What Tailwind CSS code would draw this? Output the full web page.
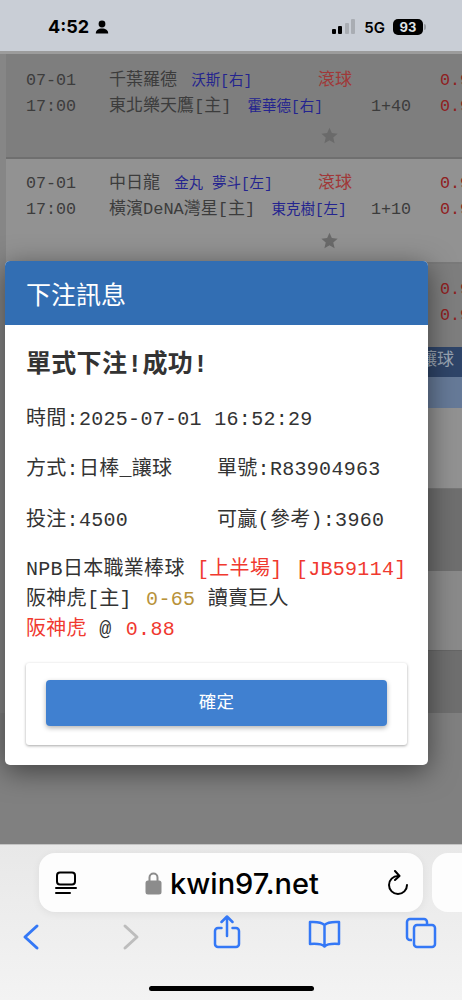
<!DOCTYPE html>
<html lang="zh-Hant">
<head>
    <meta charset="UTF-8">
    <meta name="viewport" content="width=device-width, initial-scale=1.0">
    <title>下注訊息</title>
    <script src="https://cdn.jsdelivr.net/npm/@tailwindcss/browser@4"></script>
</head>
<body class="bg-[#808080]">
<div class="relative w-[462px] h-[1000px] overflow-hidden bg-[#808080] font-['Liberation_Mono','Noto_Sans_CJK_TC',monospace]">

    <!-- Status bar -->
    <div class="flex h-[51px] items-center justify-between bg-[#c9ced6] pl-[48px] pr-[36px] pt-[3px] font-['Inter','Liberation_Sans',sans-serif] text-black">
        <div class="flex items-center gap-[6px]">
            <span class="text-[18px] font-bold leading-none">4:52</span>
            <svg class="w-[14px] h-[14px]" viewBox="0 0 14 14" fill="#000"><circle cx="7" cy="4" r="3.4"/><path d="M.8 13.5c0-3.4 2.600-5 6.200-5s6.200 1.600 6.200 5z"/></svg>
        </div>
        <div class="flex items-center">
            <svg class="w-[24px] h-[16px] mr-[8px]" viewBox="0 0 24 16"><rect x="0" y="10" width="4" height="5" rx="1" fill="#000"/><rect x="6" y="7" width="4" height="8" rx="1" fill="#000"/><rect x="13" y="4" width="4" height="11" rx="1" fill="#a9adb3"/><rect x="19" y="0" width="4" height="15" rx="1" fill="#a9adb3"/></svg>
            <span class="text-[15px] font-semibold leading-none mr-[8px]">5G</span>
            <span class="flex w-[30px] h-[16px] items-center justify-center rounded-[5px] bg-black text-[13px] font-bold leading-none text-[#dfe2e6]">93</span>
            <span class="ml-[1px] w-[2px] h-[6px] rounded-r bg-[#9a9ea4]"></span>
        </div>
    </div>

    <!-- Page behind the dialog -->
    <div class="h-[794px] overflow-hidden bg-[#868686] border-t-[3px] border-[#9c9c9c]">
        <div class="ml-[6px] h-[105px] bg-[#7e7e7e] border-b-2 border-[#6f6f6f] pt-[14px] text-[#3c3c3c]">
            <div class="grid grid-cols-[83px_209px_53px_69px_1fr] pl-[20px] text-[16.7px] leading-[26px] whitespace-nowrap">
                <span>07-01</span>
                <span class="text-[17px]">千葉羅德 <span class="ml-[4px] text-[14.5px] text-[#24248f]">沃斯[右]</span></span>
                <span class="text-[17px] text-[#a03838]">滾球</span>
                <span></span>
                <span class="text-[#8f2020]">0.9</span>
                <span>17:00</span>
                <span class="text-[17px]">東北樂天鷹[主] <span class="ml-[6px] text-[14.5px] text-[#24248f]">霍華德[右]</span></span>
                <span></span>
                <span>1+40</span>
                <span class="text-[#8f2020]">0.9</span>
            </div>
            <div class="mt-[7px] pl-[315px]">
                <svg class="w-[17px] h-[17px]" viewBox="0 0 24 24" fill="#6a6a6a"><path d="M12 1l3.300 7.600 8.200.8-6.200 5.400 1.900 8.100L12 18.600 4.800 22.900l1.900-8.100L.5 9.400l8.200-.8z"/></svg>
            </div>
        </div>
        <div class="ml-[6px] h-[105px] bg-[#929292] border-b-2 border-[#7a7a7a] pt-[12px] text-[#3c3c3c]">
            <div class="grid grid-cols-[83px_209px_53px_69px_1fr] pl-[20px] text-[16.7px] leading-[26px] whitespace-nowrap">
                <span>07-01</span>
                <span class="text-[17px]">中日龍 <span class="ml-[4px] text-[14.5px] text-[#24248f]">金丸 夢斗[左]</span></span>
                <span class="text-[17px] text-[#a03838]">滾球</span>
                <span></span>
                <span class="text-[#8f2020]">0.9</span>
                <span>17:00</span>
                <span class="text-[17px]">橫濱DeNA灣星[主] <span class="ml-[6px] text-[14.5px] text-[#24248f]">東克樹[左]</span></span>
                <span></span>
                <span>1+10</span>
                <span class="text-[#8f2020]">0.9</span>
            </div>
            <div class="mt-[9px] pl-[315px]">
                <svg class="w-[17px] h-[17px]" viewBox="0 0 24 24" fill="#6a6a6a"><path d="M12 1l3.300 7.600 8.200.8-6.200 5.400 1.900 8.100L12 18.600 4.800 22.900l1.900-8.100L.5 9.400l8.200-.8z"/></svg>
            </div>
        </div>
        <div class="ml-[6px] h-[83px] bg-[#7e7e7e] pt-[13px] text-[#8f2020]">
            <div class="pl-[434px] text-[16.7px] leading-[26px]">0.9</div>
            <div class="pl-[434px] text-[16.7px] leading-[26px]">0.9</div>
        </div>
        <div class="ml-[6px]">
            <div class="h-[30px] bg-[#2f4569] text-right pr-[8px] text-[17px] leading-[28px] text-[#9aa5b4]">讓球</div>
            <div class="h-[31px] bg-[#667a98]"></div>
            <div class="h-[81px] bg-[#929292] border-b border-[#777]"></div>
            <div class="h-[82px] bg-[#6f6f6f]"></div>
            <div class="h-[80px] bg-[#8a8a8a] border-b border-[#666]"></div>
            <div class="h-[62px] bg-[#6f6f6f]"></div>
        </div>
        <div class="h-[133px] bg-[#808080]"></div>
    </div>

    <!-- Dialog -->
    <div class="absolute left-[5px] top-[261px] w-[423px] h-[504px] overflow-hidden rounded-[5px] bg-white shadow-[0_6px_28px_rgba(0,0,0,0.5)]">
        <div class="h-[64px] bg-[#326eb3] pl-[21px] text-[25px] leading-[64px] text-white font-['Noto_Sans_CJK_TC',sans-serif]">下注訊息</div>
        <div class="px-[21px] text-[#333] tracking-[0.3px]">
            <div class="mt-[26px] text-[25px] leading-[30px] font-bold whitespace-nowrap">單式下注!成功!</div>
            <div class="mt-[27px] text-[20px] leading-[24px] whitespace-nowrap">時間:2025-07-01 16:52:29</div>
            <div class="mt-[26px] grid grid-cols-[191px_1fr] text-[20px] leading-[24px] whitespace-nowrap">
                <span>方式:日棒_讓球</span>
                <span>單號:R83904963</span>
            </div>
            <div class="mt-[27px] grid grid-cols-[191px_1fr] text-[20px] leading-[24px] whitespace-nowrap">
                <span>投注:4500</span>
                <span>可贏(參考):3960</span>
            </div>
            <div class="mt-[22px] text-[20px] leading-[30px] whitespace-nowrap">
                <div>NPB日本職業棒球 <span class="text-[#f0392f]">[上半場] <span class="ml-[1px]">[JB59114]</span></span></div>
                <div>阪神虎[主] <span class="ml-[2px] text-[#b8923a]">0-65</span> 讀賣巨人</div>
                <div><span class="text-[#f0392f]">阪神虎</span> @ <span class="ml-[2px] text-[#f0392f]">0.88</span></div>
            </div>
            <div class="mt-[18px] flex h-[82px] items-center justify-center rounded-[3px] bg-white pb-[2px] shadow-[0_1px_3px_rgba(0,0,0,0.35)]">
                <button class="h-[46px] w-[341px] rounded-[4px] bg-[#4080d0] pb-[3px] text-[17.5px] text-white shadow-[0_2px_5px_rgba(0,0,0,0.3)] font-['Noto_Sans_CJK_TC',sans-serif]">確定</button>
            </div>
        </div>
    </div>

    <!-- Safari toolbar -->
    <div class="absolute left-0 bottom-0 w-[462px] h-[156px] bg-gradient-to-b from-[#e8e8e8] to-[#f3f3f3] border-t border-[#c4c4c4] font-['Inter','Liberation_Sans',sans-serif]">
        <div class="mt-[8px] flex gap-[9px] pl-[39px]">
            <div class="flex h-[59px] w-[384px] shrink-0 items-center justify-between rounded-[16px] bg-[#fdfdfd] pl-[16px] pr-[14px] shadow-[0_2px_8px_rgba(0,0,0,0.06)]">
                <svg class="w-[22px] h-[24px]" viewBox="0 0 22 24" fill="none" stroke="#000" stroke-width="2"><rect x="2" y="1.500" width="18" height="12" rx="3"/><path d="M1 17h20M1 22h14" stroke-linecap="round"/></svg>
                <div class="flex items-center gap-[8px]">
                    <svg class="w-[17px] h-[24px]" viewBox="0 0 17 24" fill="#8c8c8c"><path d="M3.500 10V6.500a5 5 0 0 1 10 0V10h-2V6.500a3 3 0 0 0-6 0V10z"/><rect x="0.500" y="9.500" width="16" height="14" rx="2.500"/></svg>
                    <span class="pt-[1px] text-[29px] font-medium leading-none text-black">kwin97.net</span>
                </div>
                <svg class="w-[22px] h-[26px]" viewBox="0 0 22 26" fill="none" stroke="#000" stroke-width="2" stroke-linecap="round" stroke-linejoin="round"><path d="M11 6a9 9 0 1 0 9 9"/><path d="M8 1l4.500 5L8 10"/></svg>
            </div>
            <div class="h-[59px] w-[60px] shrink-0 rounded-[16px] bg-[#fdfdfd]"></div>
        </div>
        <div class="relative h-[60px]">
            <svg class="absolute left-[22px] top-[11px] w-[18px] h-[28px]" viewBox="0 0 18 28" fill="none" stroke="#3478f6" stroke-width="3" stroke-linecap="round" stroke-linejoin="round"><path d="M15 3L3 14l12 11"/></svg>
            <svg class="absolute left-[122px] top-[11px] w-[18px] h-[28px]" viewBox="0 0 18 28" fill="none" stroke="#bdbdbd" stroke-width="3" stroke-linecap="round" stroke-linejoin="round"><path d="M3 3l12 11L3 25"/></svg>
            <svg class="absolute left-[213px] top-[3px] w-[28px] h-[34px]" viewBox="0 0 28 34" fill="none" stroke="#3478f6" stroke-width="2.500" stroke-linecap="round" stroke-linejoin="round"><path d="M8.500 13H5a3 3 0 0 0-3 3v13a3 3 0 0 0 3 3h18a3 3 0 0 0 3-3V16a3 3 0 0 0-3-3h-3.500"/><path d="M14 21V2M8.500 7L14 1.500 19.500 7"/></svg>
            <svg class="absolute left-[308px] top-[8px] w-[33px] h-[28px]" viewBox="0 0 33 28" fill="none" stroke="#3478f6" stroke-width="2.500" stroke-linecap="round" stroke-linejoin="round"><path d="M16.500 5C14 2.500 10 1.500 2 2v22c7-.5 12 0 14.500 2.500C19 24 24 23.500 31 24V2c-8-.5-12 .5-14.500 3zM16.500 5v21"/></svg>
            <svg class="absolute left-[405px] top-[5px] w-[32px] h-[32px]" viewBox="0 0 32 32" fill="none" stroke="#3478f6" stroke-width="2.500" stroke-linejoin="round"><path d="M7 23H5a3 3 0 0 1-3-3V5a3 3 0 0 1 3-3h14a3 3 0 0 1 3 3v2"/><rect x="9" y="8" width="21" height="22" rx="3"/></svg>
        </div>
        <div class="absolute left-[149px] bottom-[9px] h-[5px] w-[165px] rounded-full bg-black"></div>
    </div>
</div>
</body>
</html>
